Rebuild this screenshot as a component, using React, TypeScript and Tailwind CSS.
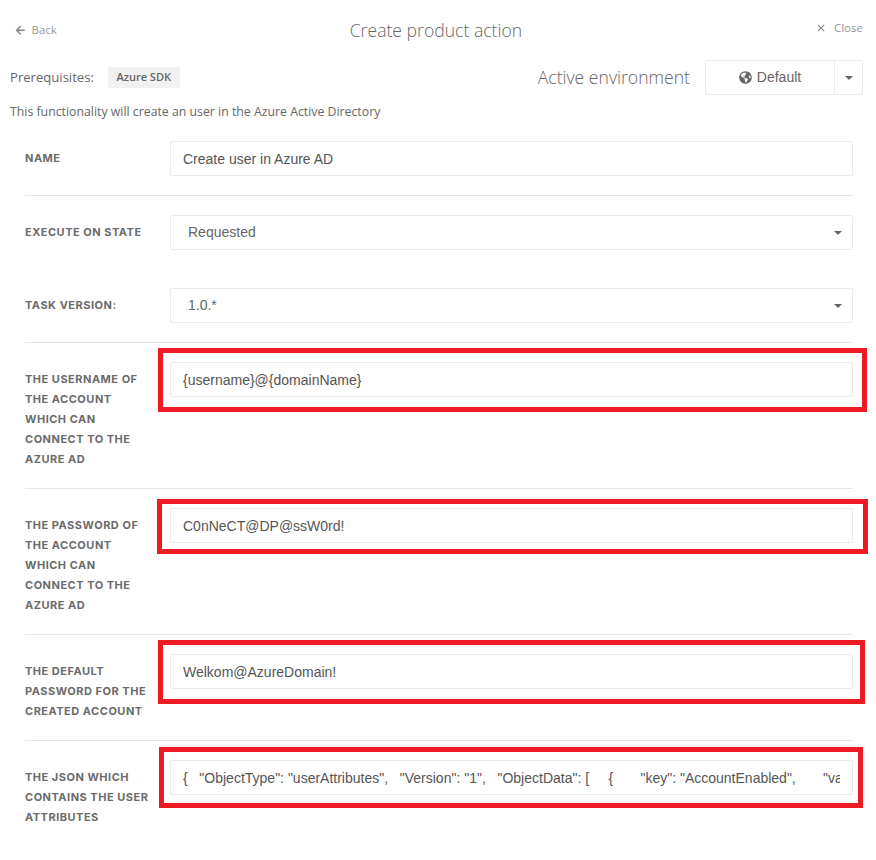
import React from "react";
import { FaArrowLeft, FaGlobeAmericas } from "react-icons/fa";

const Caret = () => (
  <svg width="8" height="4" viewBox="0 0 8 4" className="shrink-0">
    <path d="M0 0h8L4 4z" fill="#666666" />
  </svg>
);

const inputClass =
  "block h-[35px] w-full rounded-[2px] border border-[#ebebeb] bg-white px-3 text-[14px] text-[#555555] outline-none [font-family:'Liberation_Sans',Arial,sans-serif]";

function Label({ lines }: { lines: string[] }) {
  return (
    <div className="w-[145px] shrink-0 pt-[7px] text-[11px] leading-[20px] font-bold whitespace-nowrap text-[#6b6b6b] [font-family:Inter,sans-serif] tracking-[0.5px]">
      {lines.map((l) => (
        <div key={l}>{l}</div>
      ))}
    </div>
  );
}

function Row({ lines, border = true, children }: { lines: string[]; border?: boolean; children: React.ReactNode }) {
  return (
    <div className={`flex py-[19px] ${border ? "border-b border-[#e6e6e6]" : ""}`}>
      <Label lines={lines} />
      <div className="relative min-w-0 flex-1">{children}</div>
    </div>
  );
}

function SelectBox({ value }: { value: string }) {
  return (
    <div className="flex h-[35px] items-center justify-between rounded-[2px] border border-[#ebebeb] bg-white pr-[10px] pl-[17px] text-[14px] text-[#666666] [font-family:'Liberation_Sans',Arial,sans-serif]">
      <span>{value}</span>
      <Caret />
    </div>
  );
}

const json =
  '{   "ObjectType": "userAttributes",   "Version": "1",   "ObjectData": [     {       "key": "AccountEnabled",       "value": "true"    }  ]}';

export default function App() {
  return (
    <div className="relative h-[860px] w-[876px] overflow-hidden bg-white [font-family:'Open_Sans',sans-serif]">
      <header className="flex h-[60px] items-start justify-between pr-[13px] pl-[15px]">
        <div className="flex items-center gap-[6px] pt-[21px] text-[11.5px] leading-[18px] text-[#999999]">
          <FaArrowLeft className="text-[10.5px] text-[#888888]" />
          <span>Back</span>
        </div>
        <h1 className="pt-[18px] pr-[2px] text-[17.6px] leading-[25px] font-light text-[#666666]">Create product action</h1>
        <div className="flex items-center gap-[9px] pt-[19px] text-[11.5px] leading-[18px] text-[#999999]">
          <svg width="8" height="8" viewBox="0 0 8 8">
            <path d="M.8.8l6.4 6.4M7.2.8.8 7.2" stroke="#888888" strokeWidth="1.2" fill="none" />
          </svg>
          <span>Close</span>
        </div>
      </header>

      <div className="flex h-[35px] items-center justify-between pr-[13px] pl-[10px]">
        <div className="flex items-center gap-[14px] text-[13.1px] text-[#666666]">
          <span>Prerequisites:</span>
          <span className="flex h-[21px] items-center rounded-[2px] bg-[#f1f1f1] px-[8.5px] text-[11px] font-semibold text-[#666666]">
            Azure SDK
          </span>
        </div>
        <div className="flex items-center">
          <span className="mr-[15px] text-[17.6px] font-light text-[#666666]">Active environment</span>
          <div className="flex h-[35px] w-[158px] rounded-[2px] border border-[#ebebeb] text-[14px] text-[#666666] [font-family:'Liberation_Sans',Arial,sans-serif]">
            <div className="flex flex-1 items-center justify-center gap-[5px] border-r border-[#ebebeb]">
              <FaGlobeAmericas className="text-[13px]" />
              <span>Default</span>
            </div>
            <div className="flex w-[27px] items-center justify-center">
              <Caret />
            </div>
          </div>
        </div>
      </div>

      <p className="mt-[7px] h-[20px] pl-[10px] text-[12.3px] leading-[20px] text-[#666666]">
        This functionality will create an user in the Azure Active Directory
      </p>

      <div className="mr-[23px] ml-[25px]">
        <Row lines={["NAME"]}>
          <input readOnly defaultValue="Create user in Azure AD" className={inputClass} />
        </Row>
        <Row lines={["EXECUTE ON STATE"]} border={false}>
          <SelectBox value="Requested" />
        </Row>
        <Row lines={["TASK VERSION:"]}>
          <SelectBox value="1.0.*" />
        </Row>
        <Row lines={["THE USERNAME OF", "THE ACCOUNT", "WHICH CAN", "CONNECT TO THE", "AZURE AD"]}>
          <input readOnly defaultValue="{username}@{domainName}" className={inputClass} />
          <div className="absolute -top-[14px] -right-[14px] -left-[12px] h-[64px] border-[5px] border-[#ed1c24]" />
        </Row>
        <Row lines={["THE PASSWORD OF", "THE ACCOUNT", "WHICH CAN", "CONNECT TO THE", "AZURE AD"]}>
          <input readOnly defaultValue="C0nNeCT@DP@ssW0rd!" className={inputClass} />
          <div className="absolute -top-[9px] -right-[15px] -left-[13px] h-[55px] border-[5px] border-[#ed1c24]" />
        </Row>
        <Row lines={["THE DEFAULT", "PASSWORD FOR THE", "CREATED ACCOUNT"]}>
          <input readOnly defaultValue="Welkom@AzureDomain!" className={inputClass} />
          <div className="absolute -top-[14px] -right-[12px] -left-[12px] h-[64px] border-[5px] border-[#ed1c24]" />
        </Row>
        <Row lines={["THE JSON WHICH", "CONTAINS THE USER", "ATTRIBUTES"]} border={false}>
          <input readOnly defaultValue={json} className={inputClass} />
          <div className="absolute -top-[13px] -right-[10px] -left-[11px] h-[61px] border-[5px] border-[#ed1c24]" />
        </Row>
      </div>
    </div>
  );
}
